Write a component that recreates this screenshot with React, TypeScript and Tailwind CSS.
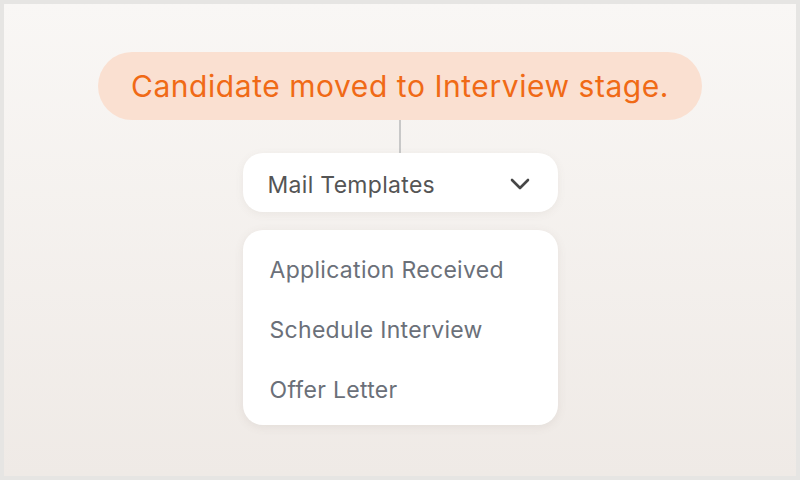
import React from "react";

const templates = ["Application Received", "Schedule Interview", "Offer Letter"];

function Chevron() {
  return (
    <svg width="20" height="12" viewBox="0 0 20 12" fill="none">
      <path
        d="M2 2l8 8 8-8"
        stroke="#464646"
        strokeWidth="2.6"
        strokeLinecap="round"
        strokeLinejoin="round"
      />
    </svg>
  );
}

export default function App() {
  return (
    <div
      className="w-[800px] h-[480px] border-4 border-[#e6e5e3] bg-gradient-to-b from-[#f9f7f5] to-[#efeae6] flex flex-col items-center pt-[48px]"
      style={{ fontFamily: "Inter, 'Open Sans', sans-serif" }}
    >
      <div className="h-[68px] w-[604px] rounded-full bg-[#fae0d1] flex items-center justify-center">
        <span className="text-[30px] text-[#f06a16] tracking-[0.55px]">
          Candidate moved to Interview stage.
        </span>
      </div>
      <div className="h-[33px] w-[2px] bg-[#c8c8c8]" />
      <div className="w-[315px] h-[59px] rounded-[20px] bg-white flex items-center justify-between pl-[25px] pr-[28px] pt-[3px] shadow-[0_2px_8px_rgba(120,100,90,0.08)]">
        <span className="text-[23px] text-[#555555] tracking-[0.3px] pt-[2px]">Mail Templates</span>
        <Chevron />
      </div>
      <div className="mt-[18px] w-[315px] rounded-[20px] bg-white pt-[10px] pb-[5px] shadow-[0_2px_10px_rgba(120,100,90,0.10)]">
        {templates.map((t) => (
          <div
            key={t}
            className="h-[60px] flex items-center pl-[27px] text-[23px] text-[#6b7079] tracking-[0.3px]"
          >
            {t}
          </div>
        ))}
      </div>
    </div>
  );
}
